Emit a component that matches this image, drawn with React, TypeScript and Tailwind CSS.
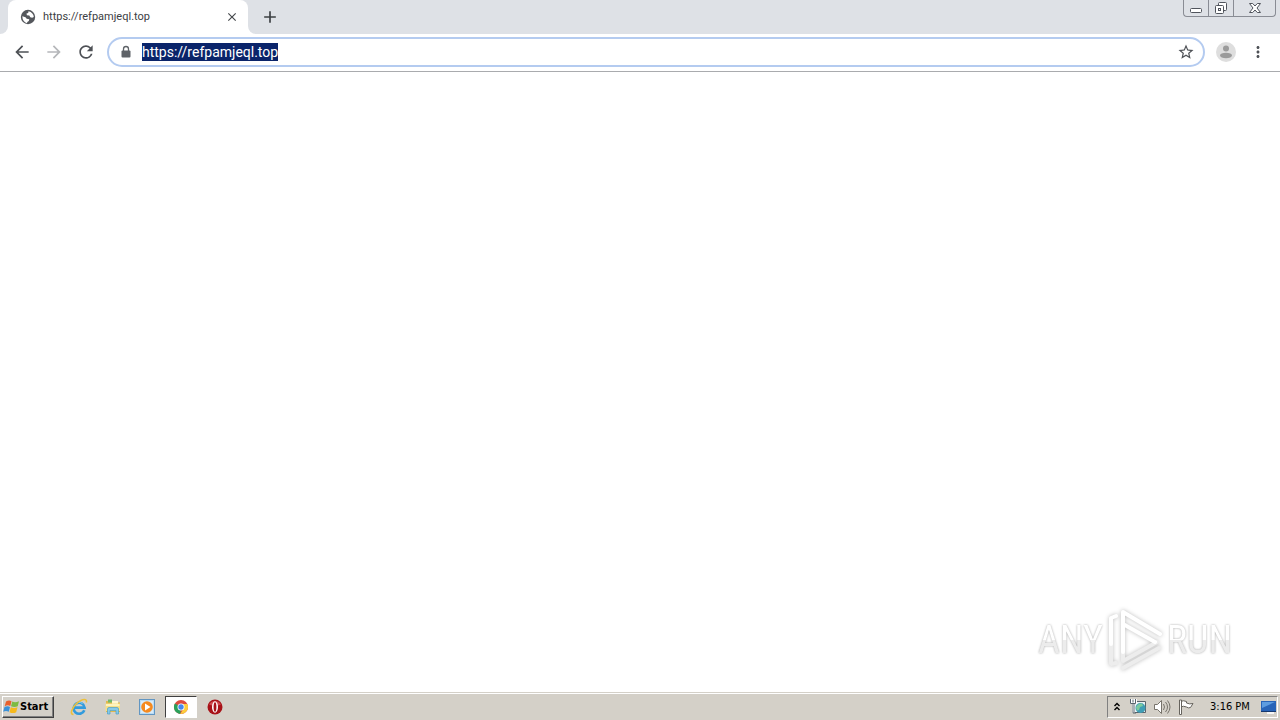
import { useState } from "react";
import type { ReactNode } from "react";
import { MdArrowBack, MdArrowForward, MdClose, MdMoreVert, MdRefresh, MdStarBorder, MdAdd } from "react-icons/md";

const PAGE_URL = "https://refpamjeql.top";

function MinimizeIcon() {
  return (
    <svg width="14" height="14" viewBox="0 0 14 14" fill="#fff" stroke="#50545c">
      <rect x="1.5" y="7.5" width="11" height="4" rx="1" />
    </svg>
  );
}

function RestoreIcon() {
  return (
    <svg width="14" height="14" viewBox="0 0 14 14" fill="#fff" stroke="#50545c">
      <rect x="4.5" y="1.5" width="8" height="8" rx="1" />
      <rect x="1.5" y="4.5" width="8" height="8" rx="1" />
      <rect x="4.5" y="7.5" width="2" height="2" />
    </svg>
  );
}

function CloseWindowIcon() {
  return (
    <svg width="14" height="14" viewBox="0 0 14 14" fill="#fff" stroke="#50545c">
      <path d="M1.5 2.5h3.2L7 5l2.3-2.5h3.2L9 7l3.5 4.5H9.3L7 9l-2.3 2.5H1.5L5 7z" />
    </svg>
  );
}

function WindowButton({ label, className, children }: { label: string; className: string; children: ReactNode }) {
  return (
    <button aria-label={label} className={`flex h-[17px] items-center justify-center border-[#898c94] ${className}`}>
      {children}
    </button>
  );
}

function GlobeIcon() {
  return (
    <svg width="16" height="16" viewBox="0 0 16 16" className="shrink-0">
      <circle cx="8" cy="8" r="7.2" fill="#54575c" />
      <path d="M2.3 7.2l3.2 1 1.2 1.5 2.6.6-.5 1.8-1.5.8-.3 1.3Q2.5 12.5 2.3 7.2z" fill="#fff" />
      <path d="M8.5 2.2l-.3 1.7-1.7.6.4 1.7 2.4.2 1 1.8 1.8.6 1.7-.7Q13.5 3.5 8.5 2.2z" fill="#fff" />
    </svg>
  );
}

function LockIcon() {
  return (
    <svg width="12" height="14" viewBox="0 0 12 14">
      <path d="M3.5 6V4a2.5 2.5 0 0 1 5 0v2" fill="none" stroke="#5f6368" strokeWidth="1.3" />
      <rect x="1.5" y="5.5" width="9" height="7" rx="1" fill="#5f6368" />
    </svg>
  );
}

function WindowsFlag() {
  return (
    <svg width="17" height="16" viewBox="0 0 17 16">
      <path d="M3 2.5Q6 .5 8.5 2.2L7.3 7Q4.8 5.6 1.7 7.2z" fill="#e8602c" />
      <path d="M9.3 2.5Q12 4 16 2.3L14.7 7.3Q11.5 8.8 8 7.3z" fill="#7dbb42" />
      <path d="M1.5 8Q4.5 6.4 7 7.9L5.8 12.8Q3 11.3.2 12.8z" fill="#3a91d8" />
      <path d="M7.8 8.2Q11 9.7 14.5 8.2L13.2 13.2Q10 14.9 6.5 13.2z" fill="#f6b91c" />
    </svg>
  );
}

function ExplorerIcon() {
  return (
    <svg width="18" height="18" viewBox="0 0 18 18" fill="none">
      <path d="M14.3 12.2A5.5 5.5 0 1 1 14.6 9.6H5" stroke="#319bdd" strokeWidth="2.6" />
      <path d="M5 6.8A5 5 0 0 1 12.5 5.5" stroke="#8ad3f5" />
      <path d="M3.5 16.5C-.5 16.5 1.5 10 7 5.2S17.5.2 16.3 4.5" stroke="#ecc03c" strokeWidth="1.6" />
    </svg>
  );
}

function FolderIcon() {
  return (
    <svg width="18" height="18" viewBox="0 0 18 18">
      <path d="M2 3h6l1 1.5h7V14H2z" fill="#e0b94d" />
      <path d="M4 1.5h4v3H4z" fill="#72b96a" />
      <path d="M8 3h6v3H8z" fill="#fff6cf" />
      <path d="M1.5 5.5H16V13H1.5z" fill="#f6df87" />
      <path d="M2 6h13.5v2H2z" fill="#fdf3bd" />
      <path d="M3.5 16v-5q0-1.5 1.5-1.5h8q1.5 0 1.5 1.5v5H12v-3.5H6V16z" fill="#86c9e8" stroke="#4c9fc9" strokeWidth=".7" />
    </svg>
  );
}

function MediaPlayerIcon() {
  return (
    <svg width="18" height="18" viewBox="0 0 18 18">
      <rect x="1.5" y="1.5" width="15" height="15" fill="#b9dcf5" stroke="#6296c2" />
      <rect x="3" y="3" width="12" height="12" fill="#d8ebf9" />
      <circle cx="9" cy="9" r="5.8" fill="#f58a1f" />
      <path d="M7 5.5v7L12.5 9z" fill="#fff" />
    </svg>
  );
}

function ChromeIcon() {
  return (
    <svg width="16" height="16" viewBox="0 0 16 16">
      <circle cx="8" cy="8" r="7" fill="#dd4b3e" />
      <path d="M8 8L1.9 4.5A7 7 0 0 0 7.3 15z" fill="#2aa15b" />
      <path d="M8 5h6.3A7 7 0 0 1 7.3 15L10.6 9.5z" fill="#fccd3c" />
      <circle cx="8" cy="8" r="3.5" fill="#fff" />
      <circle cx="8" cy="8" r="2.7" fill="#4587ed" />
    </svg>
  );
}

function OperaIcon() {
  return (
    <svg width="16" height="16" viewBox="0 0 16 16">
      <circle cx="8" cy="8" r="7.5" fill="#a81218" />
      <path d="M2 5.5A7 7 0 0 1 14 5.5Q8 8 2 5.5z" fill="#cf4a4e" />
      <ellipse cx="8" cy="8" rx="3" ry="5.8" fill="#fff" />
      <ellipse cx="8" cy="8" rx="1.4" ry="4.8" fill="#a81218" />
    </svg>
  );
}

function NetworkIcon() {
  return (
    <svg width="18" height="18" viewBox="0 0 18 18">
      <path d="M5.5 3.5h11v11h-11z" fill="#e9f1f2" stroke="#59636b" />
      <circle cx="11.5" cy="10" r="5" fill="#3f9db5" />
      <path d="M7 9.5Q9 5 13 5.5l1 2.5-3 1-1 3-2 .5z" fill="#7ccb9f" />
      <path d="M1 1h7v5H5.5v9H3V6H1z" fill="#fff" />
      <path d="M1.5 1v4.5h5V1M4 1.5v3M4 5.5V15h3" fill="none" stroke="#59636b" />
    </svg>
  );
}

function SpeakerIcon() {
  return (
    <svg width="18" height="18" viewBox="0 0 18 18" fill="none" stroke="#77736b">
      <path d="M1.5 6.5h3l4-4v13l-4-4h-3z" fill="#fff" />
      <path d="M10.5 6q2 3 0 6M12.5 4q4 5 0 10M14.5 2.5q5 6.5 0 13" />
    </svg>
  );
}

function FlagIcon() {
  return (
    <svg width="18" height="18" viewBox="0 0 18 18" fill="#fff" stroke="#66635d">
      <path d="M3.5 3.5q3-1.5 6 0V5q3 1.5 6.5.5l-2.5 4q-2 1-4-.5-3-1.5-6 0z" />
      <path d="M2.5 2v14.5h2V2z" />
    </svg>
  );
}

function DesktopIcon() {
  return (
    <svg width="17" height="16" viewBox="0 0 17 16">
      <path d="M1 2h15v10H1z" fill="#2864b8" />
      <path d="M2 3h13L2 9z" fill="#5d9ce0" />
      <path d="M1 12h15v1H1z" fill="#16396f" />
      <path d="M7 13h7v2H7z" fill="#f6f6f6" />
    </svg>
  );
}

function PlayMark() {
  return (
    <svg
      width="60"
      height="64"
      viewBox="0 0 60 64"
      fill="none"
      strokeWidth="4"
      strokeLinejoin="round"
      strokeLinecap="round"
      className="drop-shadow-[0_0_2px_#bbb]"
    >
      <path d="M6 36V56l5-1M18 44V53L52 34M18 60L54 40" stroke="#ededed" />
      <path d="M6 36V10l5-2M18 44V4L55 26M18 16L50 34" stroke="#fff" />
    </svg>
  );
}

function Watermark() {
  const word =
    "bg-linear-to-b from-white from-50% to-[#ececec] to-50% bg-clip-text text-transparent drop-shadow-[0_0_1px_#aaa]";
  return (
    <div className="mr-12 mb-5 flex items-center gap-[2px] font-['Liberation_Sans_Narrow','Roboto_Condensed','Liberation_Sans',sans-serif] text-[38px] leading-[48px]">
      <span className={word}>ANY</span>
      <PlayMark />
      <span className={word}>RUN</span>
    </div>
  );
}

const shortcuts = [
  { label: "Internet Explorer", icon: <ExplorerIcon />, active: false },
  { label: "Windows Explorer", icon: <FolderIcon />, active: false },
  { label: "Windows Media Player", icon: <MediaPlayerIcon />, active: false },
  { label: "Google Chrome", icon: <ChromeIcon />, active: true },
  { label: "Opera", icon: <OperaIcon />, active: false },
];

export default function App() {
  const [url, setUrl] = useState(PAGE_URL);

  return (
    <div className="flex min-h-screen flex-col bg-white font-['DejaVu_Sans_Condensed','DejaVu_Sans',sans-serif] text-[11px] text-black">
      <header>
        <div className="flex h-[34px] items-start bg-[#dee1e6]">
          <div className="h-full w-2 bg-white">
            <div className="h-full rounded-br-lg bg-[#dee1e6]" />
          </div>
          <div className="flex h-full w-60 items-center rounded-t-lg bg-white pr-2 pl-3">
            <GlobeIcon />
            <span className="ml-[7px] flex-1 truncate font-['Roboto','Noto_Sans',sans-serif] text-[11px] text-[#3c4043]">{PAGE_URL}</span>
            <button aria-label="Close tab" className="flex size-4 items-center justify-center text-[#45484c]">
              <MdClose size={14} />
            </button>
          </div>
          <div className="h-full w-2 bg-white">
            <div className="h-full rounded-bl-lg bg-[#dee1e6]" />
          </div>
          <button aria-label="New tab" className="ml-1 flex h-full w-5 items-center justify-center text-[#3c4043]">
            <MdAdd size={20} />
          </button>
          <div className="mr-1 ml-auto flex">
            <WindowButton label="Minimize" className="w-[25px] rounded-bl border-b border-l">
              <MinimizeIcon />
            </WindowButton>
            <WindowButton label="Restore" className="w-[25px] border-b border-l">
              <RestoreIcon />
            </WindowButton>
            <WindowButton label="Close" className="w-[43px] rounded-br border-x border-b">
              <CloseWindowIcon />
            </WindowButton>
          </div>
        </div>

        <div className="flex h-[38px] items-center border-b border-[#a9abae] px-3 pb-px">
          <div className="flex gap-3 text-[#4e5156]">
            <button aria-label="Back" className="flex size-5 items-center justify-center">
              <MdArrowBack size={20} />
            </button>
            <button aria-label="Forward" className="flex size-5 items-center justify-center text-[#b5b7ba]">
              <MdArrowForward size={20} />
            </button>
            <button aria-label="Reload" className="flex size-5 items-center justify-center">
              <MdRefresh size={20} />
            </button>
          </div>
          <div className="ml-[11px] flex h-[30px] flex-1 items-center rounded-full border-2 border-[#b4cbf0] pr-[9px] pl-[11px]">
            <LockIcon />
            <input
              aria-label="Address"
              value={url}
              onChange={(e) => setUrl(e.target.value)}
              className="ml-[10px] h-[18px] field-sizing-content bg-[#0a246a] font-['Roboto','Noto_Sans',sans-serif] text-sm text-white outline-none"
            />
            <button aria-label="Bookmark this page" className="ml-auto flex size-4 items-center justify-center text-[#4e5156]">
              <MdStarBorder size={18} className="shrink-0" />
            </button>
          </div>
          <button aria-label="Profile" className="ml-[11px] flex size-5 items-center justify-center rounded-full bg-[#dedede]">
            <svg width="14" height="14" viewBox="0 0 14 14" fill="#9b9b9b">
              <circle cx="7" cy="3.5" r="3" />
              <ellipse cx="7" cy="10.5" rx="6" ry="2.7" />
            </svg>
          </button>
          <button aria-label="Menu" className="ml-3 flex size-5 items-center justify-center text-[#4e5156]">
            <MdMoreVert size={18} />
          </button>
        </div>
      </header>

      <main className="flex flex-1 items-end justify-end">
        <Watermark />
      </main>

      <footer className="border-t border-[#d4d0c8]">
        <div className="flex h-[27px] items-center border-t border-white bg-[#d4d0c8] px-[2px]">
          <button className="flex h-[22px] w-[52px] items-center border border-t-white border-r-[#404040] border-b-[#404040] border-l-white font-bold shadow-[inset_-1px_-1px_0_#808080]">
            <WindowsFlag />
            Start
          </button>
          <nav className="ml-[9px] flex gap-[2px]">
            {shortcuts.map((item) => (
              <button
                key={item.label}
                aria-label={item.label}
                className={`flex h-[22px] w-8 items-center justify-center border ${
                  item.active ? "border-t-[#404040] border-r-white border-b-white border-l-[#404040] bg-white" : "border-transparent"
                }`}
              >
                {item.icon}
              </button>
            ))}
          </nav>
          <div className="ml-auto flex h-[22px] items-center border border-t-[#808080] border-r-white border-b-white border-l-[#808080] pl-1">
            <button aria-label="Show hidden icons" className="flex w-[10px] justify-center">
              <svg width="8" height="10" viewBox="0 0 8 10" fill="none" stroke="#000" strokeWidth="1.4">
                <path d="M1.5 4L4 1.5 6.5 4M1.5 8L4 5.5 6.5 8" />
              </svg>
            </button>
            <div className="ml-[7px] flex gap-[6px]">
              <NetworkIcon />
              <SpeakerIcon />
              <FlagIcon />
            </div>
            <time className="ml-[15px] w-[40px] whitespace-nowrap">3:16 PM</time>
            <button aria-label="Show desktop" className="ml-[10px]">
              <DesktopIcon />
            </button>
          </div>
        </div>
      </footer>
    </div>
  );
}
